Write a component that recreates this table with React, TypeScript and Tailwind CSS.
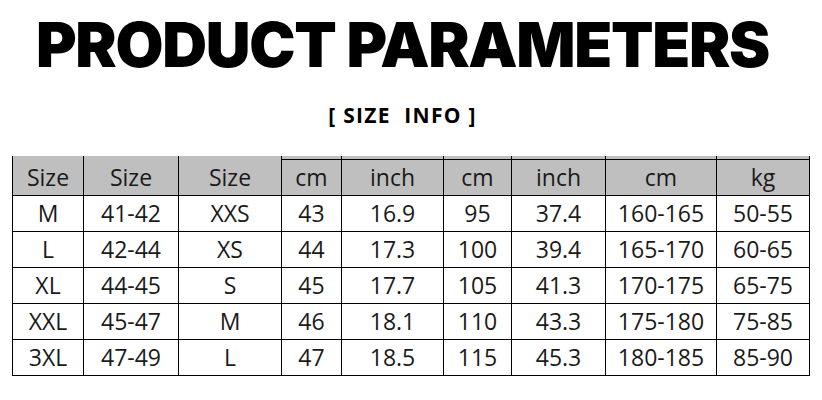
import React from 'react';

const HEAD = ['Size', 'Size', 'Size', 'cm', 'inch', 'cm', 'inch', 'cm', 'kg'];
const WIDTHS = ['w-[71px]', 'w-[95px]', 'w-[103px]', 'w-[60px]', 'w-[102px]', 'w-[68px]', 'w-[94px]', 'w-[111px]', 'w-[93px]'];

const ROWS = [
    ['M', '41-42', 'XXS', '43', '16.9', '95', '37.4', '160-165', '50-55'],
    ['L', '42-44', 'XS', '44', '17.3', '100', '39.4', '165-170', '60-65'],
    ['XL', '44-45', 'S', '45', '17.7', '105', '41.3', '170-175', '65-75'],
    ['XXL', '45-47', 'M', '46', '18.1', '110', '43.3', '175-180', '75-85'],
    ['3XL', '47-49', 'L', '47', '18.5', '115', '45.3', '180-185', '85-90'],
];

export default function App() {
    return (
        <div className="w-[822px] h-[400px] bg-white overflow-hidden text-[#1a1a1a]">
            {/* title block sits a touch left of centre, like the source image */}
            <div className="pr-[17px] pt-[14px] flex flex-col items-center">
                <h1 className="font-['Inter',sans-serif] font-black text-[62px] leading-[62px] tracking-[-1.3px] text-black whitespace-nowrap">
                    PRODUCT PARAMETERS
                </h1>
                <div className="mt-[27px] font-['Open_Sans',sans-serif] font-bold text-[21px] leading-[24px] text-black whitespace-pre tracking-[1.3px]">
                    {'[ SIZE  INFO ]'}
                </div>
            </div>

            <table className="ml-[12px] mt-[29px] border-collapse table-fixed font-['Open_Sans',sans-serif] text-[23px]">
                <thead>
                    <tr className="h-[39px] bg-[#bfbfbf]">
                        {HEAD.map((h, i) => (
                            <th
                                key={i}
                                className={`${WIDTHS[i]} p-0 pt-[3px] font-normal text-center leading-[30px] border-x border-b border-black ${
                                    i >= 3 ? 'shadow-[inset_0_3px_0_#bfbfbf,inset_0_4px_0_#000]' : ''
                                }`}
                            >
                                {h}
                            </th>
                        ))}
                    </tr>
                </thead>
                <tbody>
                    {ROWS.map((row, r) => (
                        <tr key={r} className="h-[36px]">
                            {row.map((c, i) => (
                                <td key={i} className="p-0 text-center leading-[30px] border border-black">
                                    {c}
                                </td>
                            ))}
                        </tr>
                    ))}
                </tbody>
            </table>
        </div>
    );
}
